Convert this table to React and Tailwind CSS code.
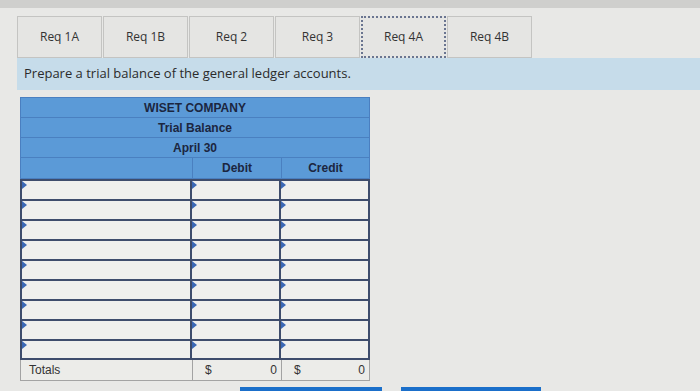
import React from 'react';

const tabs = ['Req 1A', 'Req 1B', 'Req 2', 'Req 3', 'Req 4A', 'Req 4B'];

const Tick = () => (
  <span className="absolute left-0 top-0 w-0 h-0 border-t-[4px] border-b-[4px] border-l-[5px] border-t-transparent border-b-transparent border-l-[#3b68b5]" />
);

const InputCell = ({ className }) => (
  <div className={`relative bg-[#efefed] border-2 border-[#3e4c6c] ${className}`}>
    <Tick />
  </div>
);

const App = () => {
  const rows = Array.from({ length: 9 });

  return (
    <div className="w-[700px] h-[391px] overflow-hidden bg-[#e8e8e6] font-['Open_Sans',sans-serif]">
      <div className="h-[8px] bg-[#cfcfcd]" />

      {/* tabs */}
      <div className="flex mt-[8px] ml-[17px]">
        {tabs.map((t, i) => (
          <div
            key={t}
            className={`w-[85px] h-[42px] flex items-center justify-center text-[12px] text-[#333] bg-[#e5e5e3] ${
              t === 'Req 4A'
                ? 'border-2 border-dotted border-[#6a7590]'
                : 'border border-[#c4c4c2]'
            } ${i > 0 ? 'ml-[1px]' : ''}`}
          >
            {t}
          </div>
        ))}
      </div>

      {/* instruction */}
      <div className="ml-[17px] h-[32px] bg-[#c6dcea] flex items-center pl-[7px] text-[13px] text-[#2b2b2b]">
        Prepare a trial balance of the general ledger accounts.
      </div>

      {/* table */}
      <div className="ml-[20px] mt-[7px] w-[350px] font-['Liberation_Sans',Arial,sans-serif]">
        <div className="border border-[#4a7fc0] bg-[#5b9ad7] text-[#1b2640] font-bold text-[12px]">
          <div className="h-[20px] flex items-center justify-center border-b border-[#4a80c0]">WISET COMPANY</div>
          <div className="h-[20px] flex items-center justify-center border-b border-[#4a80c0]">Trial Balance</div>
          <div className="h-[20px] flex items-center justify-center border-b border-[#4a80c0]">April 30</div>
          <div className="grid grid-cols-[172px_89px_1fr] h-[20px]">
            <div className="border-r border-[#4a80c0]" />
            <div className="border-r border-[#4a80c0] flex items-center justify-center">Debit</div>
            <div className="flex items-center justify-center">Credit</div>
          </div>
        </div>

        <div>
          {rows.map((_, i) => (
            <div
              key={i}
              className={`grid grid-cols-[172px_89px_1fr] ${i > 0 ? '-mt-[2px]' : ''} ${
                i === rows.length - 1 ? 'h-[21px]' : 'h-[22px]'
              }`}
            >
              <InputCell />
              <InputCell className="-ml-[2px]" />
              <InputCell className="-ml-[2px]" />
            </div>
          ))}
        </div>

        <div className="grid grid-cols-[172px_89px_1fr] h-[21px] text-[12px] text-[#333] bg-[#ecece9] border border-t-0 border-[#a3a3a3]">
          <div className="flex items-center pl-[8px] border-r border-[#a3a3a3]">Totals</div>
          <div className="flex items-center justify-between pl-[12px] pr-[4px] border-r border-[#a3a3a3]">
            <span>$</span>
            <span>0</span>
          </div>
          <div className="flex items-center justify-between pl-[12px] pr-[4px]">
            <span>$</span>
            <span>0</span>
          </div>
        </div>
      </div>

      {/* buttons */}
      <div className="flex mt-[6px] ml-[240px] gap-[19px]">
        <div className="w-[142px] h-[12px] bg-[#1b6fca]" />
        <div className="w-[140px] h-[12px] bg-[#1b6fca]" />
      </div>
    </div>
  );
};

export default App;
